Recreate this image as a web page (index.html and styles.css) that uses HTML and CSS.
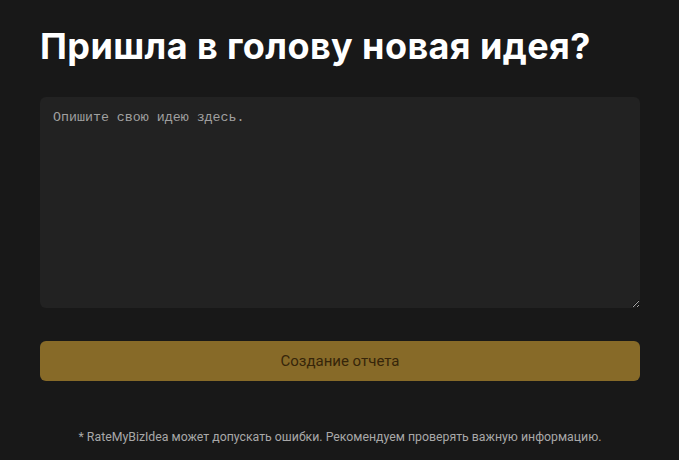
FILE: index.html
```html
<!DOCTYPE html>
<html lang="ru">
<head>
<meta charset="utf-8">
<link rel="stylesheet" href="styles.css">
</head>
<body>
<main class="page">
  <h1 class="title">Пришла в голову новая идея?</h1>
  <textarea class="idea" placeholder="Опишите свою идею здесь."></textarea>
  <button class="submit">Создание отчета</button>
  <p class="note">* RateMyBizIdea может допускать ошибки. Рекомендуем проверять важную информацию.</p>
</main>
</body>
</html>
```
FILE: styles.css
```css
html, body {
  margin: 0;
  padding: 0;
  background: #181818;
}
.page {
  width: 600px;
  padding: 22px 40px 0;
  display: flex;
  flex-direction: column;
  font-family: "Liberation Sans", Arial, sans-serif;
}
.title {
  margin: 0;
  font-family: Inter, "Liberation Sans", sans-serif;
  font-size: 36px;
  font-weight: 700;
  letter-spacing: 0.4px;
  color: #ffffff;
  line-height: 48px;
}
.idea {
  margin-top: 27px;
  height: 211px;
  box-sizing: border-box;
  background: #222222;
  border: none;
  border-radius: 6px;
  padding: 13px 13px;
  font-family: "Liberation Mono", "DejaVu Sans Mono", monospace;
  font-size: 13.3px;
  color: #dddddd;
  outline: none;
  resize: vertical;
}
.idea::placeholder {
  color: #a0a0a0;
}
.submit {
  margin-top: 33px;
  height: 40px;
  border: none;
  border-radius: 6px;
  background: #876a28;
  color: #36250a;
  font-family: Roboto, "Liberation Sans", sans-serif;
  font-size: 15px;
}
.note {
  margin: 49px 0 0;
  text-align: center;
  font-family: Roboto, "Liberation Sans", sans-serif;
  font-size: 12.3px;
  color: #a8a8a8;
}
```
